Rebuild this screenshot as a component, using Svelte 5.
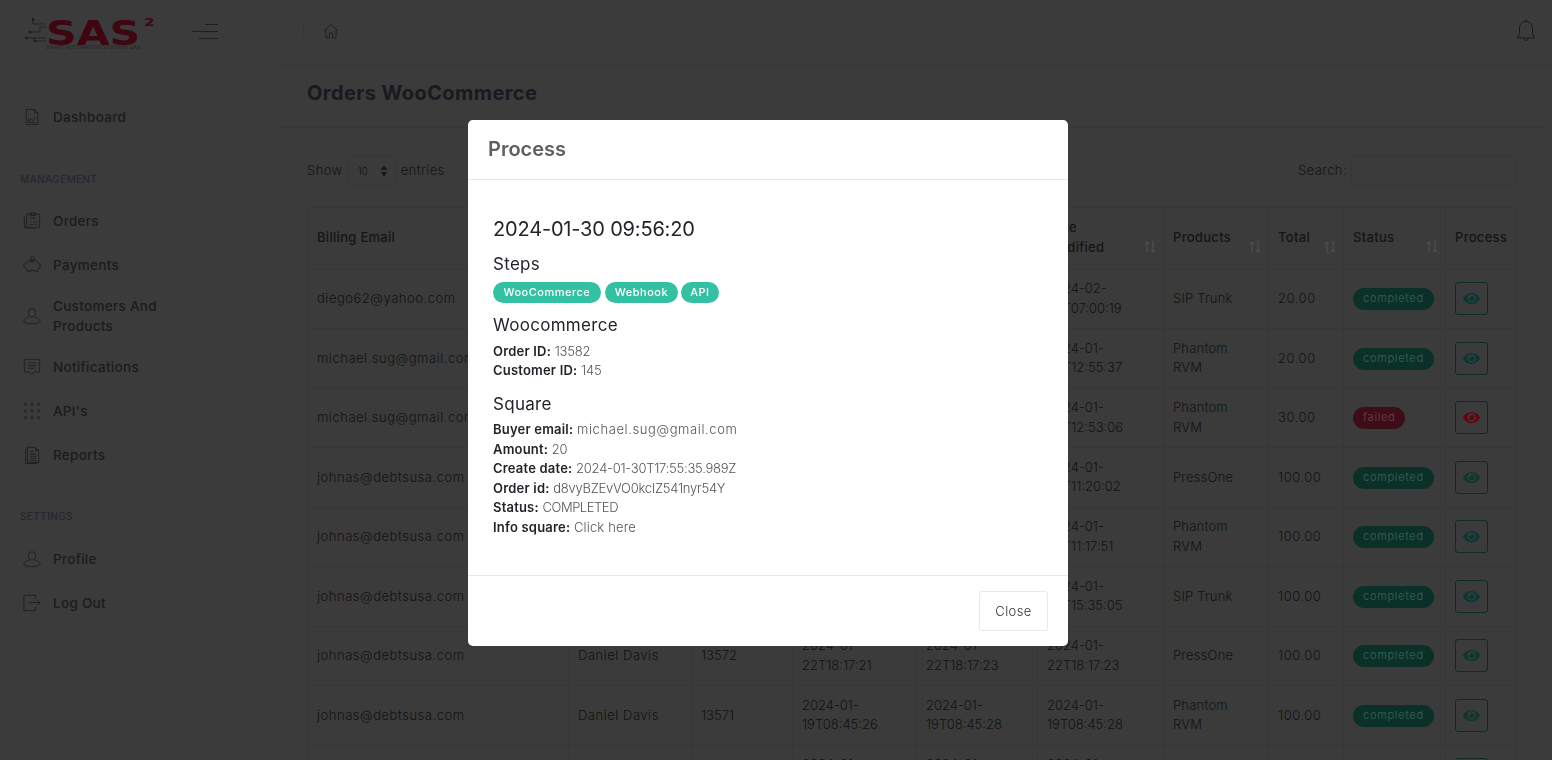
<script>
  const rows = [
    ['diego62@yahoo.com','Diego Ruiz','13582','2024-02-06T07:00:17','2024-02-06T07:00:18','2024-02-06T07:00:19','SIP Trunk','20.00','completed'],
    ['michael.sug@gmail.com','Michael Sug','13581','2024-01-30T12:55:35','2024-01-30T12:55:36','2024-01-30T12:55:37','Phantom RVM','20.00','completed'],
    ['michael.sug@gmail.com','Michael Sug','13580','2024-01-30T12:53:04','2024-01-30T12:53:05','2024-01-30T12:53:06','Phantom RVM','30.00','failed'],
    ['johnas@debtsusa.com','Daniel Davis','13576','2024-01-29T11:20:00','2024-01-29T11:20:01','2024-01-29T11:20:02','PressOne','100.00','completed'],
    ['johnas@debtsusa.com','Daniel Davis','13575','2024-01-29T11:17:49','2024-01-29T11:17:50','2024-01-29T11:17:51','Phantom RVM','100.00','completed'],
    ['johnas@debtsusa.com','Daniel Davis','13574','2024-01-25T15:35:03','2024-01-25T15:35:04','2024-01-25T15:35:05','SIP Trunk','100.00','completed'],
    ['johnas@debtsusa.com','Daniel Davis','13572','2024-01-22T18:17:21','2024-01-22T18:17:23','2024-01-22T18:17:23','PressOne','100.00','completed'],
    ['johnas@debtsusa.com','Daniel Davis','13571','2024-01-19T08:45:26','2024-01-19T08:45:28','2024-01-19T08:45:28','Phantom RVM','100.00','completed'],
    ['johnas@debtsusa.com','Daniel Davis','13570','2024-01-19T08:40:26','2024-01-19T08:40:28','2024-01-19T08:40:28','PressOne','100.00','completed']
  ];
  const heads = [[['Billing Email'],0],[['Customer'],1],[['Order'],1],[['Date','Created'],1],[['Date','Paid'],1],[['Date','Modified'],1],[['Products'],1],[['Total'],1],[['Status'],1],[['Process'],0]];
  const widths = [261,123,101,124,121,126,105,75,102,71];
  const eye = 'M572.52 241.4C518.29 135.59 410.93 64 288 64S57.68 135.64 3.48 241.41a32.35 32.35 0 0 0 0 29.19C57.71 376.41 165.07 448 288 448s230.32-71.64 284.52-177.41a32.35 32.35 0 0 0 0-29.19zM288 400a144 144 0 1 1 144-144 143.93 143.93 0 0 1-144 144zm0-240a95.31 95.31 0 0 0-25.31 3.79 47.85 47.85 0 0 1-66.9 66.9A95.78 95.78 0 1 0 288 160z';
  const splitDate = (d) => { const i = d.lastIndexOf('-') + 1; return [d.slice(0, i), d.slice(i)]; };
</script>

<div class="page">
  <aside class="sidebar">
    <div class="brand">
      <svg class="circuit" width="22" height="26" viewBox="0 0 22 26" fill="none" stroke="#323232" stroke-width="0.7">
        <path d="M8 1v5h13M5 14h10V9h6M0 20h21M8 20l3 3h10"/>
        <circle cx="8" cy="1.500" r="1" fill="#323232"/><circle cx="5" cy="14" r="1" fill="#323232"/><circle cx="1" cy="20" r="1" fill="#323232"/><circle cx="10" cy="23" r="1" fill="#323232"/>
      </svg>
      <div class="wordmark">
        <div class="sas">SAS</div>
        <div class="tag">SMART AUTOMATION SYSTEMS SAS</div>
      </div>
      <div class="two">2</div>
      <div class="burger"><i class="l1"></i><i class="l2"></i><i class="l3"></i></div>
    </div>

    <nav class="nav">
      <a class="item">
        <svg class="ico" viewBox="0 0 20 20"><path d="M3.500 1.500h9l4 4v13h-13zM12.500 1.500v4h4M6 15l3-3 2 2 3-4M6 11v5h8"/></svg>
        <span>Dashboard</span>
      </a>
      <div class="cap cap1">MANAGEMENT</div>
      <a class="item">
        <svg class="ico" viewBox="0 0 20 20"><path d="M1.500 4.500v13h13M4 2.500h14.500v15H4zM8 1h6v3H8zM7 7h8M7 11h2M11 11h5M7 14h5M14 14h2"/></svg>
        <span>Orders</span>
      </a>
      <a class="item">
        <svg class="ico" viewBox="0 0 20 20"><path d="M4 8c1-3 4-4 7-4 3 0 5 2 6 4l2 1v4l-2 1-1 3h-3v-1H8v1H5l-1-3-3-2V9zM7 7c2-1 4-1 6 0"/><circle cx="10.500" cy="2.800" r="2.300"/></svg>
        <span>Payments</span>
      </a>
      <a class="item">
        <svg class="ico" viewBox="0 0 20 20"><ellipse cx="10" cy="6.500" rx="4" ry="4.500"/><path d="M7 11c-3 1-6 2-6 4.500S4 18.500 10 18.500s9-1 9-3-3-3.500-6-4.500"/></svg>
        <span>Customers And Products</span>
      </a>
      <a class="item">
        <svg class="ico" viewBox="0 0 20 20"><path d="M2.500 1.500h15a1 1 0 0 1 1 1v13h-6l-3 3-3-3h-5v-13a1 1 0 0 1 1-1zM5.500 5.500h9M5.500 8.500h9M5.500 11.500h6"/></svg>
        <span>Notifications</span>
      </a>
      <a class="item">
        <svg class="ico" viewBox="0 0 20 20"><g><circle cx="2.500" cy="2.500" r="1.400"/><circle cx="10" cy="2.500" r="1.400"/><circle cx="17.500" cy="2.500" r="1.400"/><circle cx="2.500" cy="10" r="1.400"/><circle cx="10" cy="10" r="1.400"/><circle cx="17.500" cy="10" r="1.400"/><circle cx="2.500" cy="17.500" r="1.400"/><circle cx="10" cy="17.500" r="1.400"/><circle cx="17.500" cy="17.500" r="1.400"/></g></svg>
        <span>API's</span>
      </a>
      <a class="item">
        <svg class="ico" viewBox="0 0 20 20"><path d="M5 1.500h9l3.500 3.500v13.500H5zM3 3v16.500h13M14 1.500V5h3.500M8 6h4M8 9h7M8 11.500h7M8 14h7M8 16.500h7"/></svg>
        <span>Reports</span>
      </a>
      <div class="cap cap2">SETTINGS</div>
      <a class="item">
        <svg class="ico" viewBox="0 0 20 20"><ellipse cx="10" cy="6.500" rx="4" ry="4.500"/><path d="M7 11c-3 1-6 2-6 4.500S4 18.500 10 18.500s9-1 9-3-3-3.500-6-4.500"/></svg>
        <span>Profile</span>
      </a>
      <a class="item">
        <svg class="ico" viewBox="0 0 20 20"><path d="M14 5V1.500H1v17h13V14M6.500 9.500h12.500M16 6.500l3 3-3 3"/></svg>
        <span>Log Out</span>
      </a>
    </nav>
  </aside>

  <div class="main">
    <header class="topbar">
      <div class="crumb">
        <svg width="16" height="16" viewBox="0 0 16 16" fill="none" stroke="#3c4250" stroke-width="1"><path d="M1 8l7-6.500L15 8M3 6.500V15h3.500v-5h3v5H13V6.500"/></svg>
      </div>
      <svg class="bell" width="20" height="22" viewBox="0 0 20 22" fill="none" stroke="#323232" stroke-width="1"><path d="M10 1.500c-4 0-6.500 3-6.500 7v5L1.500 18h17l-2-4.500v-5c0-4-2.500-7-6.500-7zM8 18.500c.3 1.500 1 2 2 2s1.700-.5 2-2M9 1.500V.8h2v.7"/></svg>
    </header>

    <div class="title"><h1>Orders WooCommerce</h1></div>

    <section class="content">
      <div class="controls">
        <label class="lbl">Show <span class="sel">10<svg width="8" height="12" viewBox="0 0 8 12"><path d="M4 .5L7.500 5H.5zM4 11.500L.5 7h7z" fill="#303030"/></svg></span> entries</label>
        <label class="lbl">Search: <span class="inp"></span></label>
      </div>

      <table>
        <colgroup>{#each widths as w}<col style="width:{w}px" />{/each}</colgroup>
        <thead>
          <tr>
            {#each heads as h}
              <th>
                {#each h[0] as line, i}{#if i}<br />{/if}{line}{/each}
                {#if h[1]}
                  <svg class="sort" width="12" height="12" viewBox="0 0 12 12" fill="none" stroke="#a4a4a4" stroke-width="1"><path d="M3 12V1M.8 3.200L3 1l2.200 2.200M9 0v11M6.800 8.800L9 11l2.200-2.200"/></svg>
                {/if}
              </th>
            {/each}
          </tr>
        </thead>
        <tbody>
          {#each rows as r}
            <tr>
              <td>{r[0]}</td>
              <td>{r[1]}</td>
              <td class="tight">{r[2]}</td>
              {#each [r[3],r[4],r[5]] as d}
                <td class="tight">{splitDate(d)[0]}<br />{splitDate(d)[1]}</td>
              {/each}
              <td class="prod">{r[6]}</td>
              <td>{r[7]}</td>
              <td><span class="pill" class:bad={r[8]==='failed'}>{r[8]}</span></td>
              <td>
                <span class="eyebtn">
                  <svg width="17" height="15" viewBox="0 0 576 512"><path d={eye} fill={r[8]==='failed' ? '#d80018' : '#127060'} /></svg>
                </span>
              </td>
            </tr>
          {/each}
        </tbody>
      </table>
    </section>
  </div>
</div>

<div class="backdrop"></div>

<div class="modal">
  <div class="m-head"><h5>Process</h5></div>
  <div class="m-body">
    <h4>2024-01-30 09:56:20</h4>
    <h6 class="steps">Steps</h6>
    <div class="chips"><span class="chip first">WooCommerce</span><span class="chip">Webhook</span><span class="chip last">API</span></div>
    <h6 class="woo">Woocommerce</h6>
    <p><b>Order ID:</b> <span class="t1">13582</span></p>
    <p><b>Customer ID:</b> <span class="t1">145</span></p>
    <h6 class="sq">Square</h6>
    <p><b>Buyer email:</b> <span class="t0">michael.sug@gmail.com</span></p>
    <p><b>Amount:</b> <span class="t1">20</span></p>
    <p><b>Create date:</b> <span class="t2">2024-01-30T17:55:35.989Z</span></p>
    <p><b>Order id:</b> <span class="t2">d8vyBZEvVO0kcIZ541nyr54Y</span></p>
    <p><b>Status:</b> <span class="t3">COMPLETED</span></p>
    <p><b>Info square:</b> <span class="t4">Click here</span></p>
  </div>
  <div class="m-foot"><button>Close</button></div>
</div>

<style>
  :global(html), :global(body) { margin: 0; height: 100%; overflow: hidden; background: #767676; }
  :global(body) { font-family: Inter, "Open Sans", sans-serif; color: #212529; }

  .page { display: flex; width: 1552px; height: 760px; overflow: hidden; background: #767676; }

  .sidebar { width: 278px; flex: none; padding-left: 20px; box-sizing: border-box; }
  .brand { display: flex; align-items: flex-start; height: 66px; padding: 18px 0 0 5px; box-sizing: border-box; }
  .circuit { flex: none; margin-right: -1px; }
  .wordmark { width: 96px; flex: none; }
  .sas { font: 700 33px/25px "DejaVu Sans", sans-serif; color: #7e0a20; height: 24px; margin-top: 3px; transform-origin: left top; transform: scaleX(1.29); white-space: nowrap; }
  .tag { font: 400 5px/5px "Liberation Sans", sans-serif; color: #484a54; letter-spacing: .24px; white-space: nowrap; }
  .two { flex: none; width: 12px; margin: -1px 0 0 2px; font: 700 11px/12px "DejaVu Sans", sans-serif; color: #7e0a20; transform-origin: left top; transform: scaleX(1.4); }
  .burger { margin: 6px 0 0 36px; width: 26px; height: 15px; display: flex; flex-direction: column; justify-content: space-between; align-items: flex-end; }
  .burger i { display: block; height: 1px; background: #383e50; }
  .l1 { width: 13px; } .l2 { width: 26px; } .l3 { width: 19px; }

  .nav { padding-top: 29px; display: flex; flex-direction: column; }
  .item { display: flex; align-items: center; min-height: 26px; padding: 9px 0; font-size: 13.500px; line-height: 20px; font-weight: 500; color: #383838; width: 160px; letter-spacing: .3px; }
  .ico { width: 18px; height: 18px; flex: none; margin: 0 12px 0 3px; fill: none; stroke: #363636; stroke-width: .9; }
  .cap { font-size: 10px; font-weight: 500; color: #484e62; letter-spacing: .4px; line-height: 14px; }
  .cap1 { margin: 33px 0 13px; }
  .cap2 { margin: 32px 0 14px; }

  .main { flex: 1; min-width: 0; display: flex; flex-direction: column; }
  .topbar { height: 66px; flex: none; box-sizing: border-box; display: flex; align-items: center; justify-content: space-between; border-bottom: 1px solid #6e6e6e; padding: 0 16px 4px 25px; }
  .crumb { border-left: 1px solid #6c6c6c; height: 14px; padding-left: 19px; display: flex; align-items: center; }

  .title { height: 62px; flex: none; box-sizing: border-box; border-bottom: 1px solid #6e6e6e; padding: 0 0 8px 29px; margin-right: 6px; display: flex; align-items: center; }
  h1 { margin: 0; font-size: 20px; font-weight: 700; letter-spacing: .42px; color: #303440; }

  .content { padding: 28px 36px 0 29px; }
  .controls { display: flex; justify-content: space-between; align-items: center; height: 30px; margin-bottom: 21px; }
  .lbl { display: flex; align-items: center; gap: 4px; font-size: 13px; font-weight: 300; color: #2a2a2a; letter-spacing: .42px; padding-bottom: 2px; }
  .sel { width: 50px; height: 30px; box-sizing: border-box; border: 1px solid #6e6e6e; border-radius: 3px; display: flex; align-items: center; justify-content: space-between; padding: 0 8px 0 10px; font-size: 10px; letter-spacing: 0; margin-bottom: -2px; }
  .inp { width: 165px; height: 30px; box-sizing: border-box; border: 1px solid #6e6e6e; border-radius: 3px; margin-bottom: -2px; }

  table { width: 1209px; table-layout: fixed; border-collapse: collapse; border: 1px solid #6e6e6e; }
  th, td { border: 1px solid #6e6e6e; padding: 0 10px 0 9px; font-size: 13px; line-height: 19.500px; text-align: left; box-sizing: border-box; }
  th { height: 61.500px; padding-bottom: 1px; font-weight: 500; color: #2a2a2a; position: relative; letter-spacing: .3px; }
  td { height: 59.500px; font-weight: 300; color: #262626; letter-spacing: .52px; }
  td.tight { letter-spacing: 0; }
  td.prod { letter-spacing: .2px; }
  .sort { position: absolute; right: 7px; bottom: 16px; }
  .pill { display: inline-block; height: 22px; margin-top: 1px; box-sizing: border-box; line-height: 21px; padding: 0 10px; border-radius: 11px; background: #16604f; color: #5ab4a0; font-size: 11px; letter-spacing: .65px; font-weight: 400; vertical-align: middle; }
  .pill.bad { background: #7a1a30; color: #c87080; }
  .eyebtn { display: flex; align-items: center; justify-content: center; width: 33px; height: 33px; box-sizing: border-box; border: 1px solid #145a4c; border-radius: 3px; }

  .backdrop { position: fixed; inset: 0; background: rgba(0,0,0,.5); }

  .modal { position: fixed; left: 468px; top: 120px; width: 600px; height: 526px; background: #fff; border-radius: 5px; display: flex; flex-direction: column; overflow: hidden; }
  .m-head { height: 60px; flex: none; box-sizing: border-box; border-bottom: 1px solid #e9e9e9; display: flex; align-items: center; padding-left: 20px; }
  h5 { margin: -2px 0 0; font-size: 20px; font-weight: 600; color: #5f5f5f; letter-spacing: 0; }
  .m-body { flex: 1; box-sizing: border-box; padding: 37px 25px 0; }
  h4 { margin: 0; font-size: 20px; line-height: 24px; font-weight: 400; color: #212529; letter-spacing: -.18px; }
  h6 { margin: 0; font-size: 17px; line-height: 20px; font-weight: 400; color: #212529; letter-spacing: .3px; }
  .steps { margin-top: 13px; }
  .woo { margin-top: 12px; }
  .sq { margin-top: 13px; }
  .chips { display: flex; gap: 4px; margin-top: 8px; }
  .chip { height: 21px; line-height: 21px; padding: 0 10px; border-radius: 10.500px; background: #34c1a3; color: #fff; font-size: 11px; font-weight: 500; letter-spacing: .5px; }
  .chip.first { padding: 0 10.500px; }
  .chip.last { margin-left: -1px; padding: 0 9px; }
  .woo + p { margin-top: 6.500px; }
  .sq + p { margin-top: 6.500px; }
  p { margin: 0; font-size: 13px; line-height: 19.500px; font-weight: 300; color: #555; }
  b { font-weight: 600; color: #212529; letter-spacing: .2px; }
  .t0 { letter-spacing: .6px; }
  .t1 { letter-spacing: -.2px; }
  .t2 { letter-spacing: -.25px; }
  .t3 { letter-spacing: -.45px; }
  .t4 { letter-spacing: .15px; }
  .m-foot { height: 71px; flex: none; box-sizing: border-box; border-top: 1px solid #e9e9e9; display: flex; align-items: center; justify-content: flex-end; padding-right: 20px; }
  button { width: 69px; height: 40px; background: #fff; border: 1px solid #e9e9e9; border-radius: 3px; font: 300 13px Inter, sans-serif; color: #333; letter-spacing: .4px; }
</style>
